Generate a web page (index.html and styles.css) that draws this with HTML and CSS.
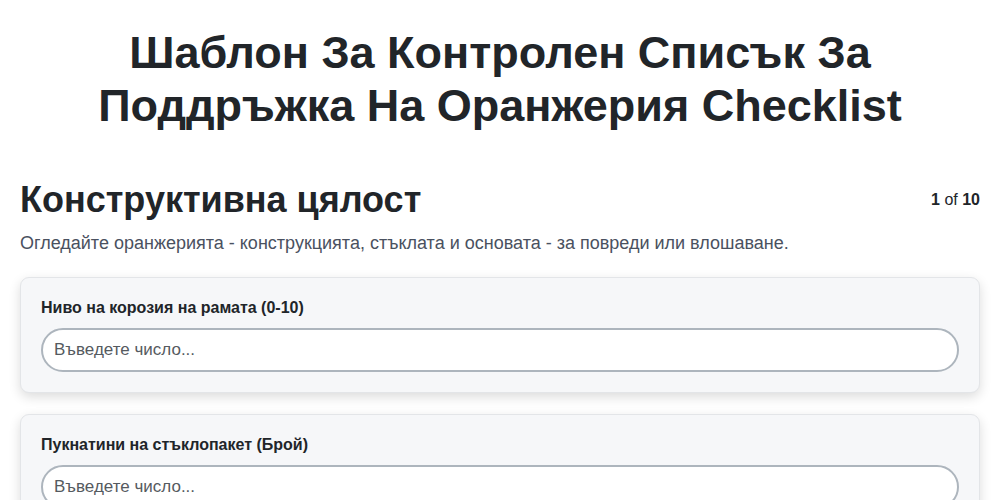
FILE: index.html
```html
<!DOCTYPE html>
<html lang="bg">
<head>
<meta charset="utf-8">
<title>Checklist</title>
<link rel="stylesheet" href="styles.css">
</head>
<body>
<div class="page">
  <h1 class="title">Шаблон За Контролен Списък За Поддръжка На Оранжерия Checklist</h1>
  <div class="section-head">
    <h2 class="section-title">Конструктивна цялост</h2>
    <div class="counter"><b>1</b> of <b>10</b></div>
  </div>
  <p class="section-desc">Огледайте оранжерията - конструкцията, стъклата и основата - за повреди или влошаване.</p>
  <div class="card">
    <label class="field-label">Ниво на корозия на рамата (0-10)</label>
    <input class="field-input" type="text" placeholder="Въведете число...">
  </div>
  <div class="card">
    <label class="field-label">Пукнатини на стъклопакет (Брой)</label>
    <input class="field-input" type="text" placeholder="Въведете число...">
  </div>
</div>
</body>
</html>
```
FILE: styles.css
```css
* { box-sizing: border-box; }
body {
  margin: 0;
  background: #ffffff;
  font-family: "Liberation Sans", Arial, sans-serif;
  color: #212529;
}
.page {
  padding: 26px 20px 20px;
}
.title {
  margin: 0 auto 0;
  max-width: 860px;
  text-align: center;
  font-size: 45px;
  line-height: 53px;
  font-weight: 700;
  color: #212529;
}
.section-head {
  display: flex;
  justify-content: space-between;
  align-items: center;
  margin-top: 46px;
}
.section-title {
  margin: 0;
  font-size: 36px;
  line-height: 44px;
  font-weight: 700;
}
.counter {
  font-size: 16px;
  color: #212529;
}
.section-desc {
  margin: 9px 0 22px;
  font-size: 18px;
  line-height: 24px;
  color: #4a5160;
}
.card {
  background: #f6f7f9;
  border: 1px solid #e3e5e8;
  border-radius: 9px;
  padding: 20px 20px 20px;
  margin-bottom: 21px;
  box-shadow: 0 4px 12px rgba(0,0,0,0.14);
}
.field-label {
  display: block;
  font-size: 16px;
  font-weight: 700;
  line-height: 20px;
  margin-bottom: 10px;
  color: #212529;
}
.field-input {
  display: block;
  width: 100%;
  height: 44px;
  border: 2px solid #adb5bd;
  border-radius: 22px;
  background: #fff;
  padding: 0 11px;
  font-family: "Liberation Sans", Arial, sans-serif;
  font-size: 17px;
  color: #212529;
  outline: none;
}
.field-input::placeholder {
  color: #555a60;
}
```
